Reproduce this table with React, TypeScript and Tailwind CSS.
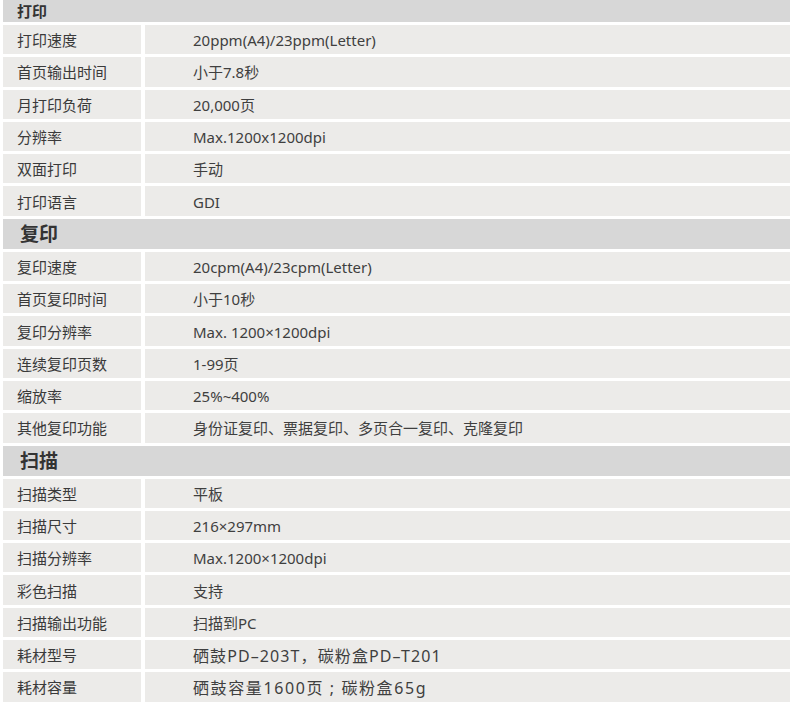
const sections: { title: string; small?: boolean; rows: [string, string, string?][] }[] = [
  {
    title: '打印',
    small: true,
    rows: [
      ['打印速度', '20ppm(A4)/23ppm(Letter)'],
      ['首页输出时间', '小于7.8秒'],
      ['月打印负荷', '20,000页'],
      ['分辨率', 'Max.1200x1200dpi'],
      ['双面打印', '手动'],
      ['打印语言', 'GDI'],
    ],
  },
  {
    title: '复印',
    rows: [
      ['复印速度', '20cpm(A4)/23cpm(Letter)'],
      ['首页复印时间', '小于10秒'],
      ['复印分辨率', 'Max. 1200×1200dpi'],
      ['连续复印页数', '1-99页'],
      ['缩放率', '25%~400%'],
      ['其他复印功能', '身份证复印、票据复印、多页合一复印、克隆复印'],
    ],
  },
  {
    title: '扫描',
    rows: [
      ['扫描类型', '平板'],
      ['扫描尺寸', '216×297mm'],
      ['扫描分辨率', 'Max.1200×1200dpi'],
      ['彩色扫描', '支持'],
      ['扫描输出功能', '扫描到PC'],
      ['耗材型号', '硒鼓PD–203T，碳粉盒PD–T201', 'text-[16px] tracking-[1.1px]'],
      ['耗材容量', '硒鼓容量1600页 ; 碳粉盒65g', 'text-[16px] tracking-[1.6px]'],
    ],
  },
];

function SpecRow({ label, value, extra }: { label: string; value: string; extra?: string }) {
  return (
    <div className="flex h-[29.3px] gap-[4px] text-[15px] leading-none">
      <div className="w-[138px] bg-[#ecebe9] flex items-center pl-[14px] pt-[2px] text-[#3a3a3a]">
        {label}
      </div>
      <div className={`flex-1 bg-[#ecebe9] flex items-center pl-[48px] pt-[2px] text-[#3f3f3f] ${extra ?? ''}`}>
        {value}
      </div>
    </div>
  );
}

export default function App() {
  return (
    <div
      className="w-[790px] h-[710px] bg-white pl-[3px] flex flex-col gap-[3px] overflow-hidden"
      style={{ fontFamily: '"Noto Sans", "Noto Sans CJK SC", sans-serif' }}
    >
      {sections.map((s) => (
        <div key={s.title} className="contents">
          {s.small ? (
            <div className="h-[22px] bg-[#d7d7d7] flex items-center pl-[14px] text-[15px] font-bold text-[#333] leading-none">
              {s.title}
            </div>
          ) : (
            <div className="h-[30px] bg-[#d7d7d7] flex items-center pl-[17px] text-[19px] font-bold text-[#333] leading-none pt-[1px]">
              {s.title}
            </div>
          )}
          {s.rows.map(([label, value, extra]) => (
            <SpecRow key={label} label={label} value={value} extra={extra} />
          ))}
        </div>
      ))}
    </div>
  );
}
